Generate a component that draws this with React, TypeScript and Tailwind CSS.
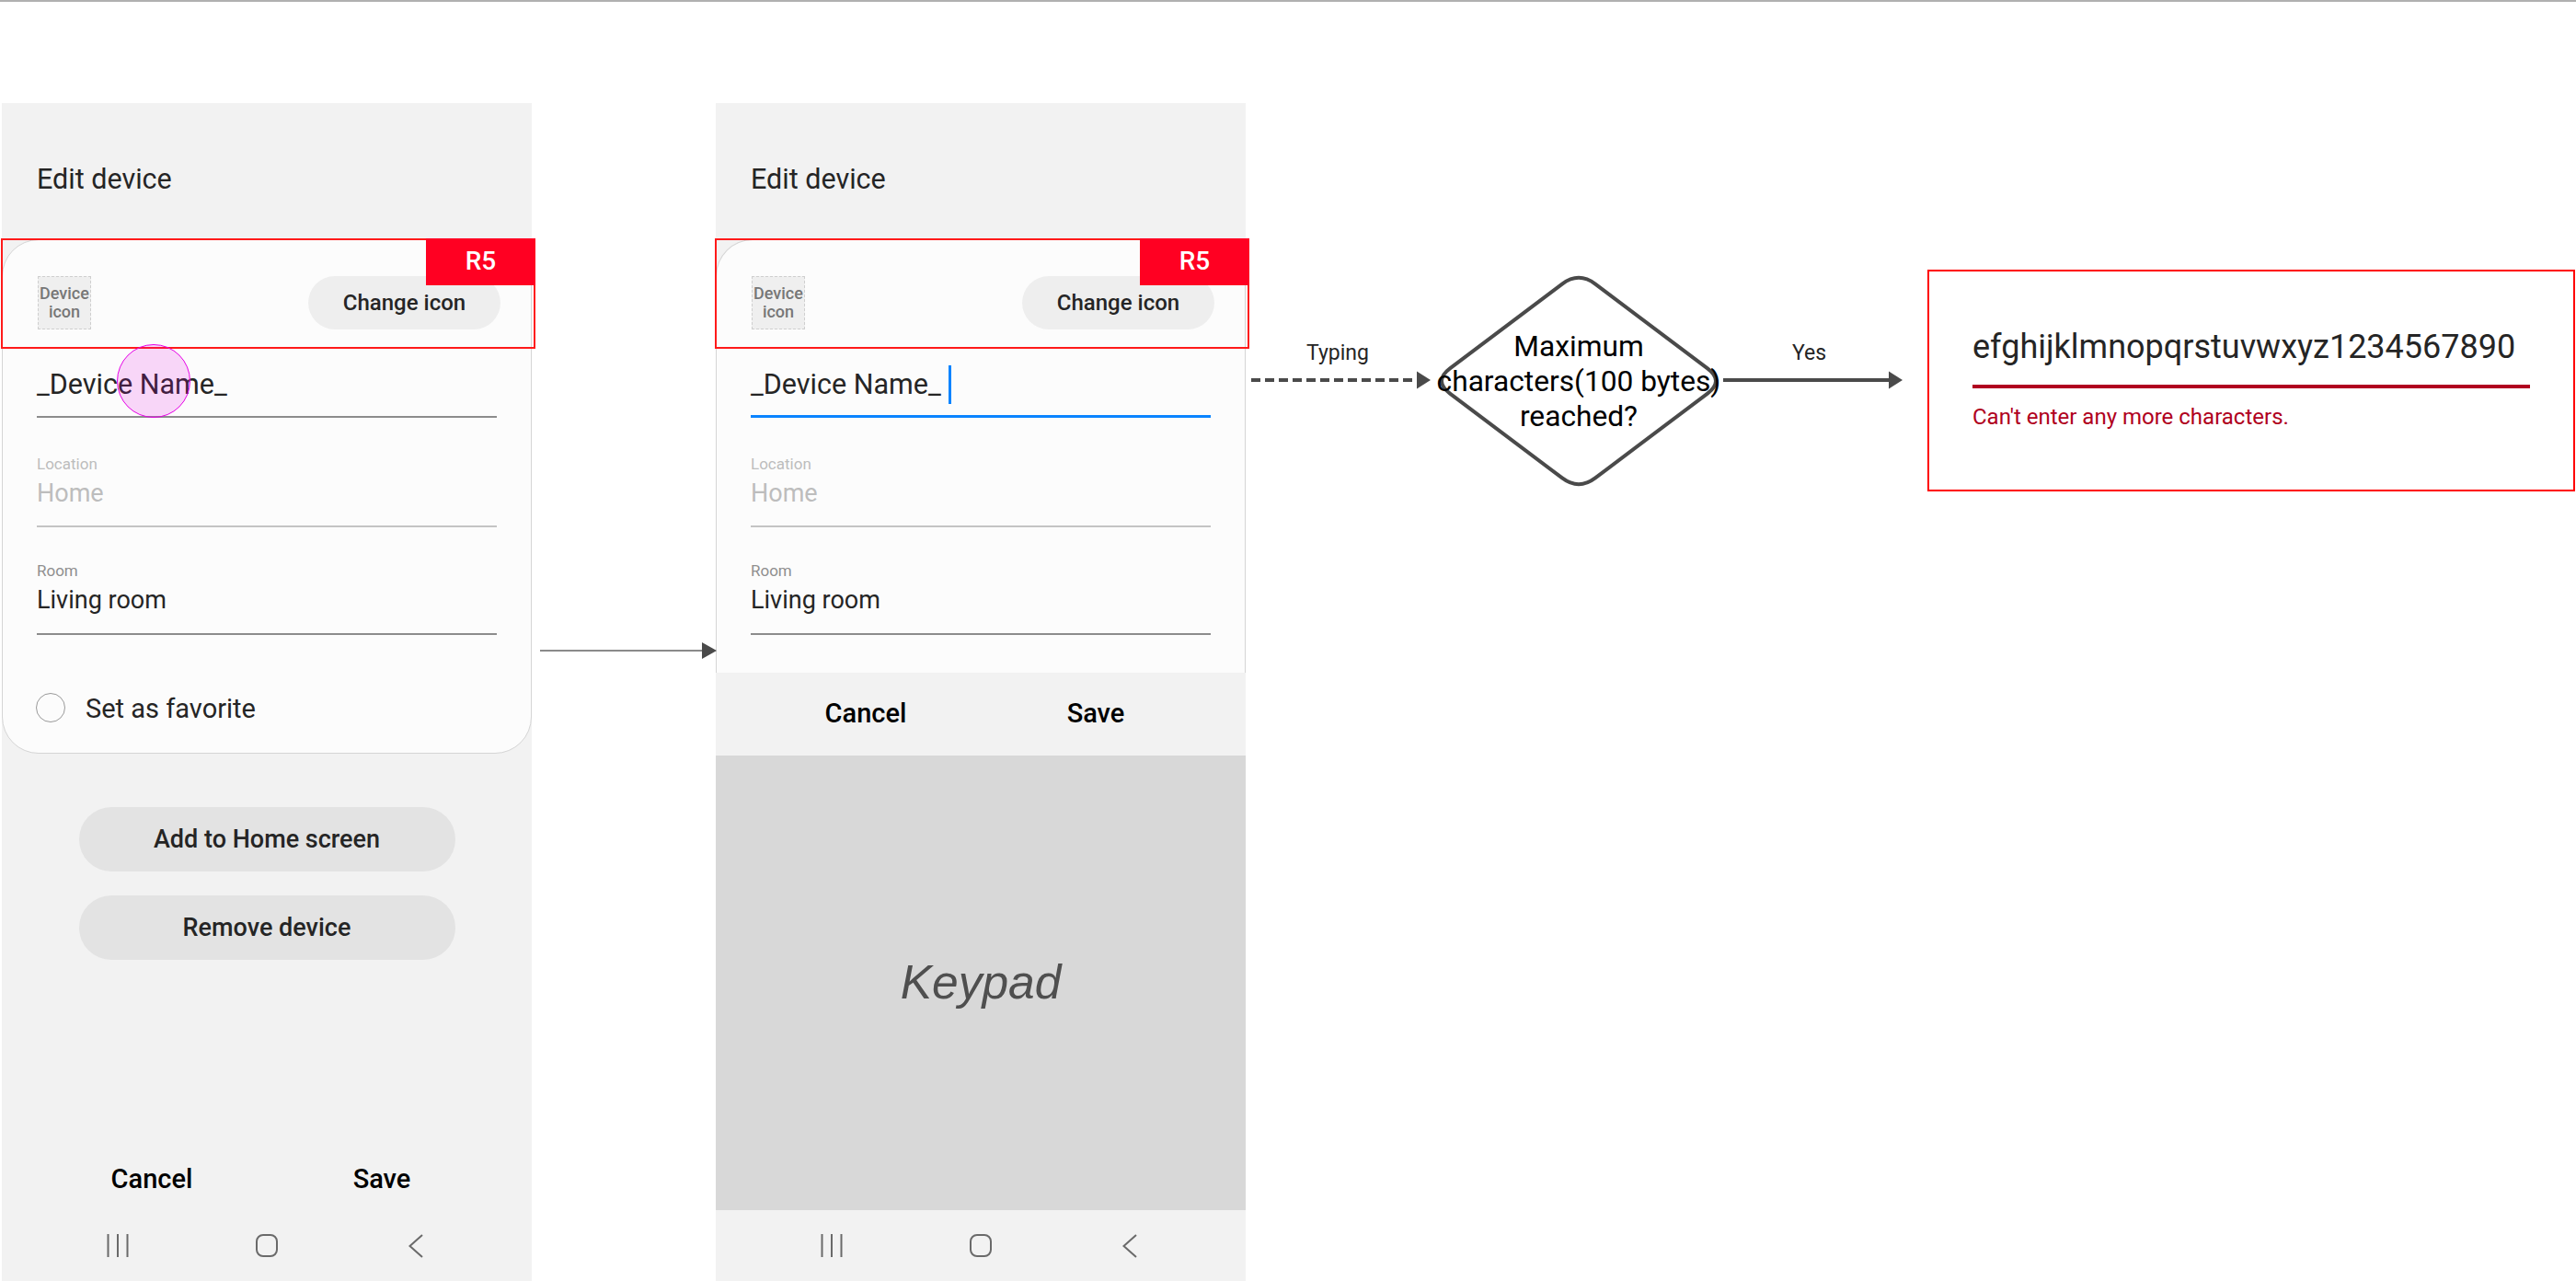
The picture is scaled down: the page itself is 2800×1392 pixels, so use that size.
import React from "react";

const roboto = "font-['Roboto',sans-serif]";

function Field({ label, value, heightClass, line, labelColor, valueColor, valueSize, padClass }: { label?: string; value: string; heightClass: string; line: string; labelColor?: string; valueColor: string; valueSize: string; padClass: string }) {
  return (
    <div className={`mx-[37px] flex flex-col justify-end border-b-[2px] ${padClass} ${heightClass} ${line}`}>
      {label && <div className={`text-[17px] leading-[24px] ${labelColor}`}>{label}</div>}
      <div className={`leading-[40px] whitespace-nowrap ${valueSize} ${valueColor}`}>{value}</div>
    </div>
  );
}

function Header() {
  return (
    <div className="h-[148px] flex items-center pl-[38px] pt-[18px] shrink-0">
      <span className="text-[30.5px] leading-[40px] text-[#252525]">Edit device</span>
    </div>
  );
}

function IconRow() {
  return (
    <div className="flex items-start justify-between pt-[39px] pl-[38px] pr-[33px]">
      <div className="w-[58px] h-[58px] border-[1.5px] border-dashed border-[#cfcfcf] bg-[#efefef] flex items-center justify-center text-center text-[18px] leading-[20px] font-medium text-[#777777] whitespace-pre-line">
        {"Device\nicon"}
      </div>
      <div className="w-[209px] h-[58px] rounded-full bg-[#eeeeee] flex items-center justify-center text-[24px] font-medium text-[#252525]">
        Change icon
      </div>
    </div>
  );
}

function RedBox() {
  return (
    <div className="absolute left-[-2px] top-[-2px] w-[581px] h-[120px] border-2 border-[#ff1a1a]">
      <div className="absolute right-[-2px] top-[-2px] w-[119px] h-[51px] pb-[2px] bg-[#ff0022] flex items-center justify-center text-white text-[28px] font-medium">
        R5
      </div>
    </div>
  );
}

function ActionRow({ heightClass }: { heightClass: string }) {
  return (
    <div className={`grid grid-cols-2 px-[38px] shrink-0 items-center text-center text-[29px] font-medium text-black ${heightClass}`}>
      <span>Cancel</span>
      <span>Save</span>
    </div>
  );
}

function NavBar() {
  return (
    <div className="h-[77px] grid grid-cols-3 px-[45px] items-center justify-items-center shrink-0">
      <svg width="24" height="25" viewBox="0 0 24 25" fill="none" stroke="#6a6a6a" strokeWidth="2">
        <path d="M1.5 0V25M12 0V25M22.5 0V25" />
      </svg>
      <svg width="24" height="25" viewBox="0 0 24 25" fill="none" stroke="#6a6a6a" strokeWidth="2">
        <rect x="1" y="1" width="22" height="23" rx="7" />
      </svg>
      <svg width="16" height="26" viewBox="0 0 16 26" fill="none" stroke="#6a6a6a" strokeWidth="2">
        <path d="M15 1L1.5 13L15 25" />
      </svg>
    </div>
  );
}

function Fields({ first }: { first: React.ReactNode }) {
  return (
    <>
      <IconRow />
      {first}
      <Field label="Location" value="Home" heightClass="h-[119px]" padClass="pb-[15px]" line="border-[#c4c4c4]" labelColor="text-[#bdbdbd]" valueColor="text-[#bdbdbd]" valueSize="text-[27px]" />
      <Field label="Room" value="Living room" heightClass="h-[117px]" padClass="pb-[16px]" line="border-[#8c8c8c]" labelColor="text-[#8f8f8f]" valueColor="text-[#252525]" valueSize="text-[27px]" />
    </>
  );
}

function PhoneOne() {
  return (
    <div className="w-[576px] h-[1280px] bg-[#f2f2f2] flex flex-col shrink-0">
      <Header />
      <div className="relative h-[559px] shrink-0 bg-[#fcfcfc] border border-[#d5d5d5] rounded-[40px]">
        <Fields
          first={<Field value="_Device Name_" heightClass="h-[96px]" padClass="pb-[14px]" line="border-[#8c8c8c]" valueColor="text-[#252525]" valueSize="text-[30.5px]" />}
        />
        <div className="flex items-center pl-[36px] mt-[61px] gap-[22px]">
          <div className="w-[32px] h-[32px] rounded-full border-[1.5px] border-[#9a9a9a]" />
          <span className="text-[29px] leading-[32px] pt-[3px] text-[#252525]">Set as favorite</span>
        </div>
        <RedBox />
        <div className="absolute left-[124px] top-[113px] w-[80px] h-[80px] rounded-full border-[1.5px] border-[#e600e6] bg-[#e600e6]/15" />
      </div>
      <div className="mt-[58px] flex flex-col items-center gap-[26px]">
        <div className="w-[409px] h-[70px] rounded-full bg-[#e3e3e3] flex items-center justify-center text-[27px] font-medium text-[#252525]">Add to Home screen</div>
        <div className="w-[409px] h-[70px] rounded-full bg-[#e3e3e3] flex items-center justify-center text-[27px] font-medium text-[#252525]">Remove device</div>
      </div>
      <div className="mt-auto" />
      <ActionRow heightClass="h-[66px]" />
      <NavBar />
    </div>
  );
}

function PhoneTwo() {
  return (
    <div className="w-[576px] h-[1280px] bg-[#f2f2f2] flex flex-col shrink-0">
      <Header />
      <div className="relative h-[471px] shrink-0 bg-[#fcfcfc] border-x border-t border-[#d5d5d5] rounded-t-[40px]">
        <Fields
          first={
            <div className="mx-[37px] h-[96px] flex items-end pb-[13px] border-b-[3px] border-[#0a84ff]">
              <span className="text-[30.5px] leading-[40px] whitespace-nowrap text-[#252525]">_Device Name_</span>
              <span className="ml-[8px] mb-[-1px] w-[3px] h-[42px] bg-[#0a84ff]" />
            </div>
          }
        />
        <RedBox />
      </div>
      <ActionRow heightClass="h-[90px]" />
      <div className="h-[494px] bg-[#d8d8d8] flex items-center justify-center shrink-0">
        <span className="font-['Liberation_Sans',sans-serif] italic text-[51.5px] text-[#4f4f4f]">Keypad</span>
      </div>
      <NavBar />
    </div>
  );
}

function Diagram() {
  return (
    <>
      {/* phone to phone arrow */}
      <svg className="absolute left-[585px] top-[695px]" width="196" height="24" viewBox="0 0 196 24">
        <path d="M2 12H180" stroke="#8a8a8a" strokeWidth="2" />
        <path d="M178 3L194 12L178 21Z" fill="#4a4a4a" />
      </svg>
      {/* typing arrow */}
      <svg className="absolute left-[1358px] top-[401px]" width="200" height="24" viewBox="0 0 200 24">
        <path d="M2 12H184" stroke="#4a4a4a" strokeWidth="4" strokeDasharray="10 5" />
        <path d="M182 2.5L197 12L182 21.5Z" fill="#4a4a4a" />
      </svg>
      <div className="absolute left-[1420px] top-[368px] text-[23px] leading-[32px] text-[#252525]">Typing</div>
      {/* diamond */}
      <svg className="absolute left-[1560px] top-[296px] overflow-visible" width="312" height="236" viewBox="0 0 312 236">
        <path d="M138 12.55Q156 -1 174 12.55L296 104.45Q314 118 296 131.55L174 223.45Q156 237 138 223.45L16 131.55Q-2 118 16 104.45Z" fill="#ffffff" stroke="#4a4a4a" strokeWidth="4" />
      </svg>
      <div className="absolute left-[1516px] top-[358px] w-[400px] text-center text-[31.7px] leading-[38px] text-black">
        <div>Maximum</div>
        <div>characters(100 bytes)</div>
        <div>reached?</div>
      </div>
      {/* yes arrow */}
      <svg className="absolute left-[1871px] top-[401px]" width="200" height="24" viewBox="0 0 200 24">
        <path d="M2 12H184" stroke="#4a4a4a" strokeWidth="4" />
        <path d="M182 2.5L197 12L182 21.5Z" fill="#4a4a4a" />
      </svg>
      <div className="absolute left-[1948px] top-[368px] text-[23px] leading-[32px] text-[#252525]">Yes</div>
      {/* result */}
      <div className="absolute left-[2095px] top-[293px] w-[704px] h-[241px] border-2 border-[#ff0000] pl-[47px] pr-[47px] pt-[60px]">
        <div className="text-[36px] leading-[44px] whitespace-nowrap text-[#252525]">efghijklmnopqrstuvwxyz1234567890</div>
        <div className="mt-[19px] h-[4px] bg-[#b00020]" />
        <div className="mt-[15px] text-[24px] leading-[32px] text-[#b00020]">Can't enter any more characters.</div>
      </div>
    </>
  );
}

export default function App() {
  return (
    <div className={`relative h-[1392px] w-[2800px] overflow-hidden bg-white ${roboto}`}>
      <div className="h-[2px] bg-[#b0b0b0]" />
      <div className="flex gap-[200px] pl-[2px] pt-[110px]">
        <PhoneOne />
        <PhoneTwo />
      </div>
      <Diagram />
    </div>
  );
}
